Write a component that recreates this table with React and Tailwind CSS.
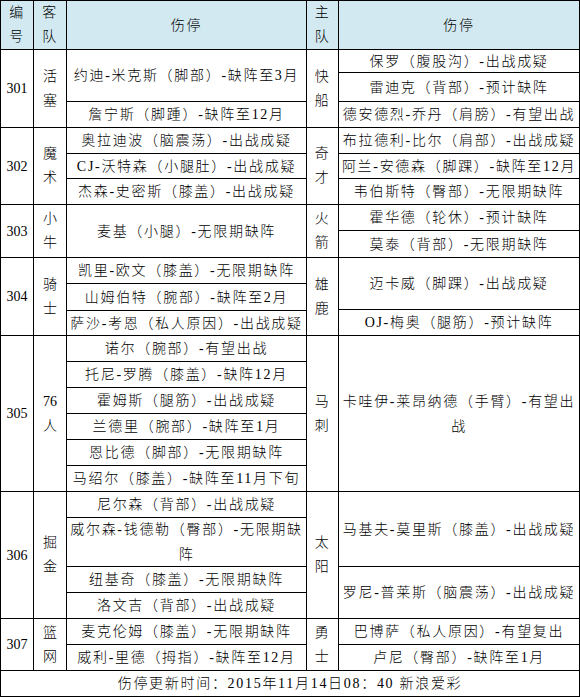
const blocks = [
  {
    num: "301",
    away: ["活", "塞"],
    left: [
      ["约迪-米克斯（脚部）-缺阵至3月", "h-[52px]"],
      ["詹宁斯（脚踵）-缺阵至12月", "h-[26px]"],
    ],
    home: ["快", "船"],
    right: [
      ["保罗（腹股沟）-出战成疑", "h-[23px]"],
      ["雷迪克（背部）-预计缺阵", "h-[29px]"],
      ["德安德烈-乔丹（肩膀）-有望出战", "h-[26px]"],
    ],
  },
  {
    num: "302",
    away: ["魔", "术"],
    left: [
      ["奥拉迪波（脑震荡）-出战成疑", "h-[26px]"],
      ["CJ-沃特森（小腿肚）-出战成疑", "h-[25px]"],
      ["杰森-史密斯（膝盖）-出战成疑", "h-[26px]"],
    ],
    home: ["奇", "才"],
    right: [
      ["布拉德利-比尔（肩部）-出战成疑", "h-[26px]"],
      ["阿兰-安德森（脚踝）-缺阵至12月", "h-[25px]"],
      ["韦伯斯特（臀部）-无限期缺阵", "h-[26px]"],
    ],
  },
  {
    num: "303",
    away: ["小", "牛"],
    left: [["麦基（小腿）-无限期缺阵", "h-[53px]"]],
    home: ["火", "箭"],
    right: [
      ["霍华德（轮休）-预计缺阵", "h-[26px]"],
      ["莫泰（背部）-无限期缺阵", "h-[27px]"],
    ],
  },
  {
    num: "304",
    away: ["骑", "士"],
    left: [
      ["凯里-欧文（膝盖）-无限期缺阵", "h-[26px]"],
      ["山姆伯特（腕部）-缺阵至2月", "h-[27px]"],
      ["萨沙-考恩（私人原因）-出战成疑", "h-[25px]"],
    ],
    home: ["雄", "鹿"],
    right: [
      ["迈卡威（脚踝）-出战成疑", "h-[52px]"],
      ["OJ-梅奥（腿筋）-预计缺阵", "h-[26px]"],
    ],
  },
  {
    num: "305",
    away: ["76", "人"],
    left: [
      ["诺尔（腕部）-有望出战", "h-[26px]"],
      ["托尼-罗腾（膝盖）-缺阵12月", "h-[26px]"],
      ["霍姆斯（腿筋）-出战成疑", "h-[26px]"],
      ["兰德里（腕部）-缺阵至1月", "h-[26px]"],
      ["恩比德（脚部）-无限期缺阵", "h-[26px]"],
      ["马绍尔（膝盖）-缺阵至11月下旬", "h-[26px]"],
    ],
    home: ["马", "刺"],
    right: [["卡哇伊-莱昂纳德（手臂）-有望出战", "h-[156px]"]],
  },
  {
    num: "306",
    away: ["掘", "金"],
    left: [
      ["尼尔森（背部）-出战成疑", "h-[26px]"],
      ["威尔森-钱德勒（臀部）-无限期缺阵", "h-[49px]"],
      ["纽基奇（膝盖）-无限期缺阵", "h-[26px]"],
      ["洛文吉（背部）-出战成疑", "h-[26px]"],
    ],
    home: ["太", "阳"],
    right: [
      ["马基夫-莫里斯（膝盖）-出战成疑", "h-[75px]"],
      ["罗尼-普莱斯（脑震荡）-出战成疑", "h-[52px]"],
    ],
  },
  {
    num: "307",
    away: ["篮", "网"],
    left: [
      ["麦克伦姆（膝盖）-无限期缺阵", "h-[26px]"],
      ["威利-里德（拇指）-缺阵至12月", "h-[26px]"],
    ],
    home: ["勇", "士"],
    right: [
      ["巴博萨（私人原因）-有望复出", "h-[26px]"],
      ["卢尼（臀部）-缺阵至1月", "h-[26px]"],
    ],
  },
];

function Stack({ chars, className }) {
  return (
    <div className={`flex flex-col items-center justify-center border-r border-b border-black leading-[24px] ${className}`}>
      {chars.map((c) => (
        <span key={c}>{c}</span>
      ))}
    </div>
  );
}

function Injuries({ rows, className }) {
  return (
    <div className={`flex flex-col border-r border-black ${className}`}>
      {rows.map(([text, h]) => (
        <div key={text} className={`flex items-center justify-center border-b border-black text-center leading-[25px] ${h}`}>
          {text}
        </div>
      ))}
    </div>
  );
}

export default function App() {
  return (
    <div className="w-[580px] border-l border-t border-black bg-white text-[14px] tracking-[1.7px] text-black font-['Liberation_Serif','Noto_Sans_CJK_SC',serif] font-light">
      <div className="flex h-[49px] bg-[#d2e9f1]">
        <Stack chars={["编", "号"]} className="w-[33px]" />
        <Stack chars={["客", "队"]} className="w-[33px]" />
        <div className="flex w-[240px] items-center justify-center border-r border-b border-black">伤停</div>
        <Stack chars={["主", "队"]} className="w-[32px]" />
        <div className="flex w-[241px] items-center justify-center border-r border-b border-black">伤停</div>
      </div>

      {blocks.map((b) => (
        <div key={b.num} className="flex">
          <div className="flex w-[33px] items-center justify-center border-r border-b border-black tracking-normal">
            {b.num}
          </div>
          <Stack chars={b.away} className="w-[33px] tracking-normal" />
          <Injuries rows={b.left} className="w-[240px]" />
          <Stack chars={b.home} className="w-[32px]" />
          <Injuries rows={b.right} className="w-[241px]" />
        </div>
      ))}

      <div className="flex h-[26px] items-center justify-center border-r border-b border-black">
        伤停更新时间：2015年11月14日08：40 新浪爱彩
      </div>
    </div>
  );
}
